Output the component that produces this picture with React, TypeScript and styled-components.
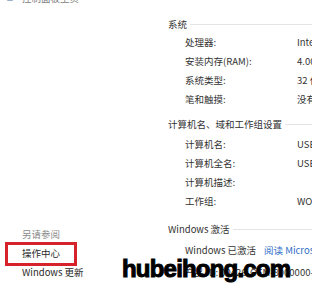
import React from "react";
import styled, { createGlobalStyle } from "styled-components";

const Global = createGlobalStyle`
  html, body { margin: 0; padding: 0; background: #ffffff; }
  body { font-family: "Noto Sans CJK SC", "Noto Sans", sans-serif; }
`;

const Page = styled.div`
  position: relative;
  width: 312px;
  height: 292px;
  overflow: hidden;
  display: grid;
  grid-template-columns: 168px 1fr;
  background: #fff;
  font-size: 9.5px;
  color: #333;
`;

const Sidebar = styled.div`
  display: flex;
  flex-direction: column;
  justify-content: space-between;
  padding-bottom: 10px;
`;

const TopItem = styled.div`
  display: flex;
  align-items: center;
  gap: 9px;
  margin-top: -7px;
  padding-left: 7px;
  height: 10px;
  color: #444;
  opacity: 0.7;
`;

const SmallIcon = styled.span`
  width: 6px;
  height: 6px;
  background: #6b8fb8;
  border-radius: 1px;
`;

const LinkGroup = styled.div`
  display: flex;
  flex-direction: column;
`;

const GroupTitle = styled.div`
  height: 19px;
  line-height: 19px;
  padding-left: 22px;
  color: #8a8a8a;
`;

const SideLink = styled.div<{ $highlight?: boolean }>`
  position: relative;
  height: 19px;
  line-height: 19px;
  padding-left: 22px;
  color: #2b2b2b;
  ${(p) =>
    p.$highlight &&
    `
    &::after {
      content: "";
      position: absolute;
      left: 5px;
      top: -2px;
      width: 72px;
      height: 24px;
      box-sizing: border-box;
      border: 3px solid #d6222b;
    }
  `}
`;

const Main = styled.div`
  display: flex;
  flex-direction: column;
  padding-top: 17px;
`;

const Section = styled.div<{ $gap: number }>`
  display: flex;
  flex-direction: column;
  margin-top: ${(p) => p.$gap}px;
`;

const Header = styled.div<{ $after: number }>`
  display: flex;
  align-items: center;
  height: 14px;
  margin-bottom: ${(p) => p.$after}px;
  color: #333;
  white-space: nowrap;
`;

const HeaderLine = styled.span`
  flex: 1;
  height: 1px;
  margin-left: 3px;
  background: #e2e4e6;
`;

const Row = styled.div`
  display: grid;
  grid-template-columns: 112px 1fr;
  height: 19px;
  align-items: center;
  padding-left: 17px;
  white-space: nowrap;
  color: #333;
`;

const Value = styled.span`
  overflow: hidden;
`;

const InlineRow = styled.div<{ $gap?: number }>`
  display: flex;
  align-items: center;
  height: 19px;
  margin-top: ${(p) => p.$gap ?? 0}px;
  padding-left: 17px;
  white-space: nowrap;
  gap: 8px;
  color: #333;
`;

const Link = styled.span`
  color: #2f6fc9;
`;

const Watermark = styled.div`
  position: absolute;
  left: 122px;
  top: 254px;
  font-family: "Liberation Sans", Arial, sans-serif;
  font-weight: 700;
  font-size: 24px;
  line-height: 30px;
  color: #000;
  -webkit-text-stroke: 1px #000;
  letter-spacing: -0.8px;
  white-space: nowrap;
`;

const systemRows: [string, string][] = [
  ["处理器:", "Intel(R) Core(TM)"],
  ["安装内存(RAM):", "4.00 GB"],
  ["系统类型:", "32 位操作系统"],
  ["笔和触摸:", "没有可用于此显示器的笔或触控输入"],
];

const nameRows: [string, string][] = [
  ["计算机名:", "USER-PC"],
  ["计算机全名:", "USER-PC"],
  ["计算机描述:", ""],
  ["工作组:", "WORKGROUP"],
];

export default function App() {
  return (
    <>
      <Global />
      <Page>
        <Sidebar>
          <TopItem>
            <SmallIcon />
            <span>控制面板主页</span>
          </TopItem>
          <LinkGroup>
            <GroupTitle>另请参阅</GroupTitle>
            <SideLink $highlight>操作中心</SideLink>
            <SideLink>Windows 更新</SideLink>
          </LinkGroup>
        </Sidebar>
        <Main>
          <Section $gap={0}>
            <Header $after={1}>
              系统
              <HeaderLine />
            </Header>
            {systemRows.map(([k, v]) => (
              <Row key={k}>
                <span>{k}</span>
                <Value>{v}</Value>
              </Row>
            ))}
          </Section>
          <Section $gap={9}>
            <Header $after={3}>
              计算机名、域和工作组设置
              <HeaderLine />
            </Header>
            {nameRows.map(([k, v]) => (
              <Row key={k}>
                <span>{k}</span>
                <Value>{v}</Value>
              </Row>
            ))}
          </Section>
          <Section $gap={12}>
            <Header $after={4}>
              Windows 激活
              <HeaderLine />
            </Header>
            <InlineRow>
              <span>Windows 已激活</span>
              <Link>阅读 Microsoft 软件许可条款</Link>
            </InlineRow>
            <InlineRow $gap={3}>
              <span>产品 ID: 00426-OEM-8000000-0000</span>
            </InlineRow>
          </Section>
        </Main>
        <Watermark>hubeihong.com</Watermark>
      </Page>
    </>
  );
}
